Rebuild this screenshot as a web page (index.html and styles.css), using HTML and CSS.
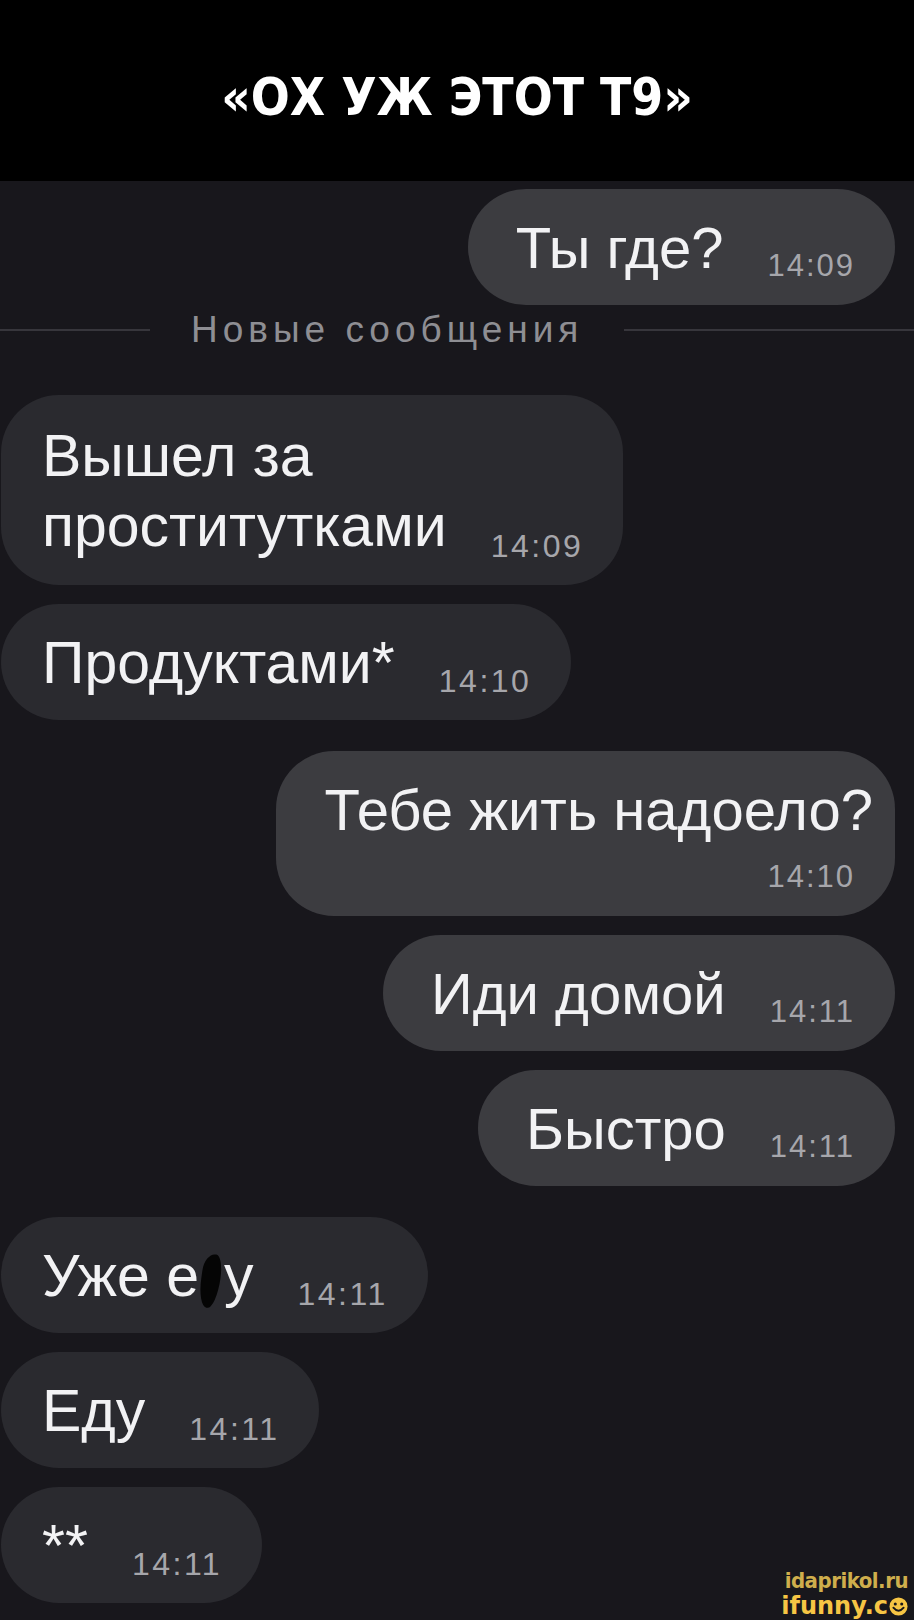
FILE: index.html
```html
<!DOCTYPE html>
<html lang="ru">

    <head>
        <meta charset="UTF-8">
        <meta name="viewport" content="width=device-width, initial-scale=1.0">
        <title>Ох уж этот Т9</title>
        <link rel="stylesheet" href="styles.css">
    </head>

    <body>
        <div class="page">
            <header class="caption">
                <h1>«ОХ УЖ ЭТОТ Т9»</h1>
            </header>

            <div class="chat">
                <div class="msg msg-out first">
                    <span class="text">Ты где?</span>
                    <span class="time">14:09</span>
                </div>

                <div class="divider">
                    <i class="line line-left"></i>
                    <span>Новые сообщения</span>
                    <i class="line"></i>
                </div>

                <div class="msg msg-in msg-multi after-divider">
                    <span class="text">Вышел за<br>проститутками</span>
                    <span class="time">14:09</span>
                </div>
                <div class="msg msg-in">
                    <span class="text">Продуктами*</span>
                    <span class="time">14:10</span>
                </div>

                <div class="msg msg-out msg-stack turn">
                    <span class="text">Тебе жить надоело?</span>
                    <span class="time">14:10</span>
                </div>
                <div class="msg msg-out">
                    <span class="text">Иди домой</span>
                    <span class="time">14:11</span>
                </div>
                <div class="msg msg-out">
                    <span class="text">Быстро</span>
                    <span class="time">14:11</span>
                </div>

                <div class="msg msg-in turn">
                    <span class="text">Уже е<span class="blot" aria-label="б"></span>у</span>
                    <span class="time">14:11</span>
                </div>
                <div class="msg msg-in">
                    <span class="text">Еду</span>
                    <span class="time">14:11</span>
                </div>
                <div class="msg msg-in">
                    <span class="text">**</span>
                    <span class="time">14:11</span>
                </div>
            </div>

            <div class="watermark">
                <span class="site">idaprikol.ru</span>
                <span class="ifunny">ifunny.c<svg viewBox="0 0 20 20" width="19" height="19">
                        <circle cx="10" cy="10" r="9.5" fill="#f6c544" />
                        <circle cx="6.6" cy="7.4" r="1.6" fill="#17161b" />
                        <circle cx="13.4" cy="7.4" r="1.6" fill="#17161b" />
                        <path d="M4.6 11.2 Q10 17.6 15.4 11.2" fill="none" stroke="#17161b" stroke-width="2" stroke-linecap="round" />
                    </svg></span>
            </div>
        </div>
    </body>

</html>
```

FILE: styles.css
```css
* {
    padding: 0;
    margin: 0;
    box-sizing: border-box;
}

body {
    background: #18171c;
    font-family: "Liberation Sans", Arial, sans-serif;
    color: #f2f2f4;
}

.page {
    position: relative;
    width: 914px;
    height: 1620px;
    overflow: hidden;
}

/* чёрная шапка с заголовком */
.caption {
    height: 181px;
    background: #000;
    display: flex;
    align-items: center;
    justify-content: center;
}

.caption h1 {
    font-family: "DejaVu Sans", sans-serif;
    font-stretch: condensed;
    font-weight: bold;
    font-size: 51px;
    color: #fff;
    padding-top: 14px;
}

/* лента сообщений */
.chat {
    display: flex;
    flex-direction: column;
    padding: 0 19px 0 1px;
}

.msg {
    display: flex;
    align-items: flex-end;
    gap: 44px;
    margin-top: 19px;
    padding: 26px 40px 24px 41px;
    border-radius: 58px;
}

.msg.first {
    margin-top: 8px;
}

.msg.turn {
    margin-top: 31px;
}

.msg.after-divider {
    margin-top: 40px;
}

.msg-in {
    align-self: flex-start;
    background: #2a2a2f;
}

.msg-out {
    align-self: flex-end;
    background: #3c3c40;
    padding-left: 48px;
}

.msg-stack {
    flex-direction: column;
    gap: 19px;
    padding-left: 48px;
    padding-right: 22px;
}

.msg-stack .time {
    margin-right: 18px;
}

.msg .text {
    font-size: 58px;
    line-height: 66px;
    white-space: nowrap;
}

.msg-in .text {
    font-size: 59px;
}

/* две строки в одном пузыре */
.msg.msg-multi .text {
    line-height: 70px;
}

.msg .time {
    font-size: 31px;
    line-height: 30px;
    letter-spacing: 2px;
    color: #a6a6ab;
    white-space: nowrap;
}

.msg-in .time {
    font-size: 32px;
    letter-spacing: 2.5px;
}

.blot {
    display: inline-block;
    width: 19px;
    height: 54px;
    margin: 0 4px 0 2px;
    vertical-align: -12px;
    background: #050505;
    border-radius: 60% 40% 50% 50% / 35% 45% 60% 55%;
    transform: rotate(8deg);
}

/* разделитель "Новые сообщения" */
.divider {
    display: flex;
    align-items: center;
    gap: 41px;
    height: 50px;
    margin: 0 -19px 0 -1px;
    font-size: 37px;
    letter-spacing: 5px;
    color: #8e8e93;
}

.divider .line {
    flex: 1;
    height: 2px;
    background: #37363c;
}

.divider .line-left {
    flex: none;
    width: 150px;
}

/* водяные знаки в углу */
.watermark {
    position: absolute;
    right: 6px;
    bottom: 2px;
    display: flex;
    flex-direction: column;
    align-items: flex-end;
    line-height: 1;
}

.watermark .site {
    font-family: "DejaVu Sans", sans-serif;
    font-stretch: condensed;
    font-weight: bold;
    font-size: 22px;
    letter-spacing: -0.5px;
    color: #cfae4c;
}

.watermark .ifunny {
    display: flex;
    align-items: center;
    font-family: "DejaVu Sans", sans-serif;
    font-weight: bold;
    font-size: 24px;
    color: #f6c544;
    margin-top: 2px;
}

.watermark .ifunny svg {
    margin-left: 1px;
}
```
